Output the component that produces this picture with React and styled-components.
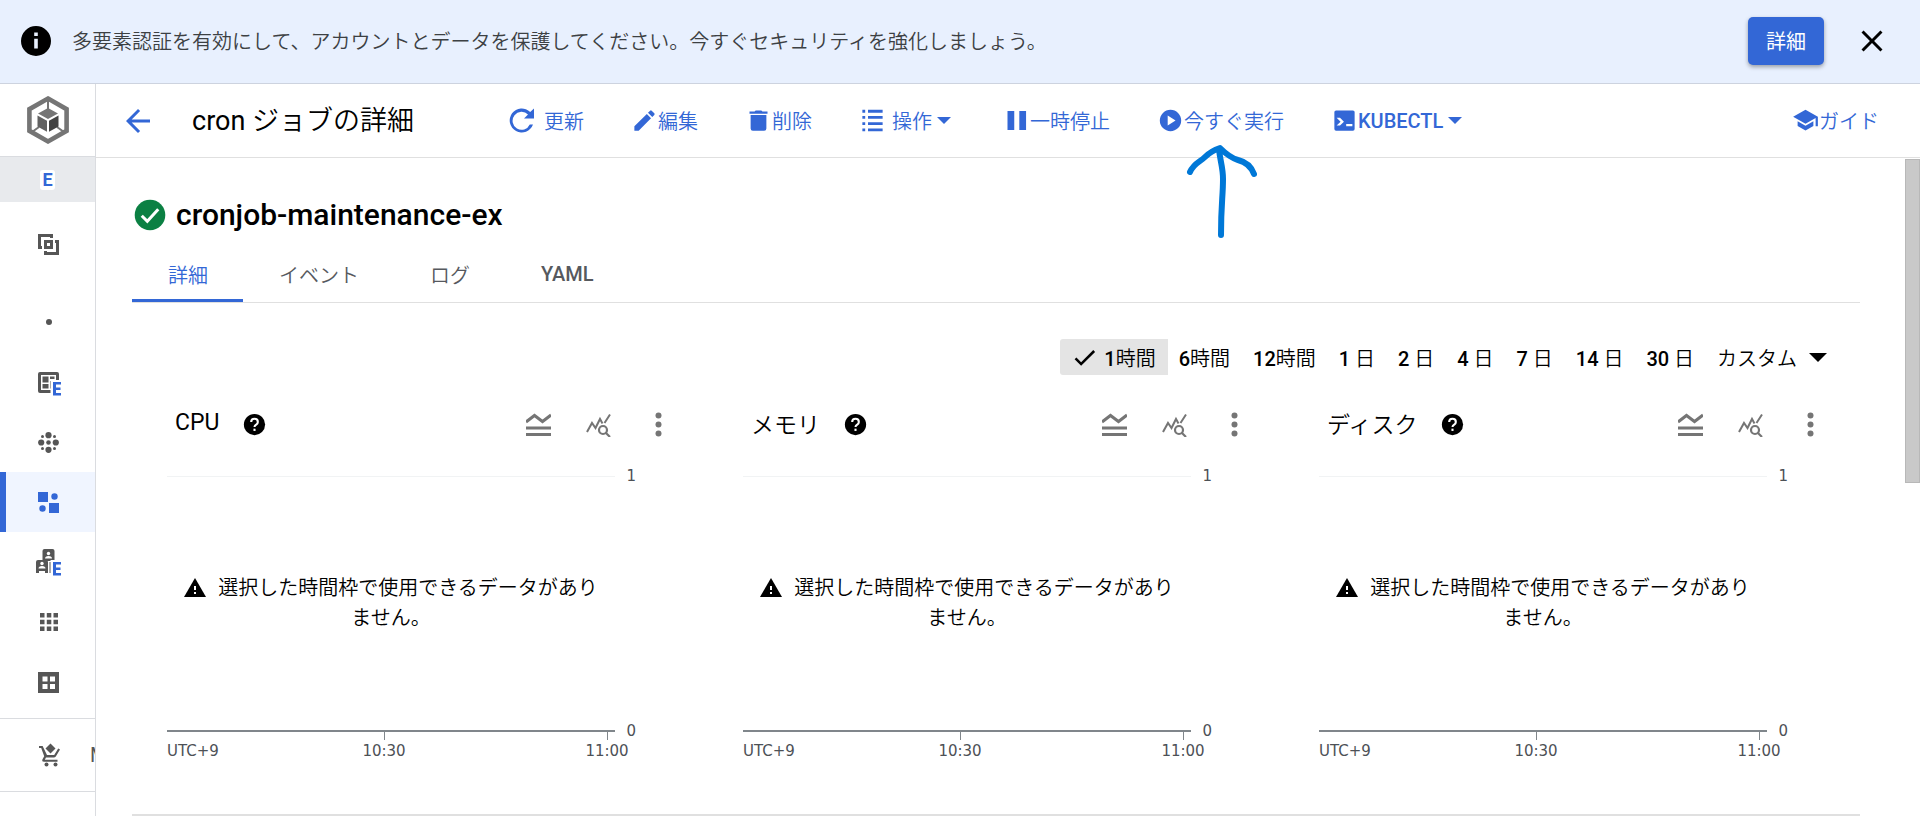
import React from "react";
import styled, { createGlobalStyle } from "styled-components";

const BLUE = "#3367d6";

const charts = ["CPU", "メモリ", "ディスク"];
const ranges = [
  ["1", "時間"],
  ["6", "時間"],
  ["12", "時間"],
  ["1", " 日"],
  ["2", " 日"],
  ["4", " 日"],
  ["7", " 日"],
  ["14", " 日"],
  ["30", " 日"],
];
const tabs = ["詳細", "イベント", "ログ", "YAML"];

function Icon({ size = 27, box = 24, children, ...rest }) {
  return (
    <svg width={size} height={size} viewBox={`0 0 ${box} ${box}`} fill="currentColor" aria-hidden="true" {...rest}>
      {children}
    </svg>
  );
}

function EnterpriseMark() {
  return (
    <>
      <path d="M15.500 11H27v16H15.500z" fill="#fff" />
      <path d="M18 13h8v2.500h-5v3h4.500V21H21v3h5v2.500h-8z" fill={BLUE} />
    </>
  );
}

function Banner() {
  return (
    <BannerBar>
      <Icon size={36}>
        <path d="M12 2a10 10 0 1 0 0 20 10 10 0 0 0 0-20zm1.200 15h-2.400v-6.500h2.400zm0-8.300h-2.400V6.400h2.400z" />
      </Icon>
      <BannerText>
        多要素認証を有効にして、アカウントとデータを保護してください。今すぐセキュリティを強化しましょう。
      </BannerText>
      <BannerButton>詳細</BannerButton>
      <IconButton aria-label="閉じる">
        <Icon size={36}>
          <path d="M19 6.400 17.600 5 12 10.600 6.400 5 5 6.400 10.600 12 5 17.600 6.400 19 12 13.400 17.600 19 19 17.600 13.400 12z" />
        </Icon>
      </IconButton>
    </BannerBar>
  );
}

function Sidebar() {
  return (
    <Side>
      <SideLogo>
        <svg width="42" height="48" viewBox="0 0 42 48" aria-label="Kubernetes Engine">
          <path d="M21 2.600 39.600 13.200v21.600L21 45.400 2.400 34.800V13.200z" fill="none" stroke="#757575" strokeWidth="4.600" />
          <path d="M21 4v10M12 31l-7 5M30 31l7 5" stroke="#757575" strokeWidth="2" />
          <path d="M21 12l10 5.500-10 5.500-10-5.500z" fill="#757575" />
          <path d="M10.500 19.500l9.500 5.300v11l-9.500-5.300z" fill="#616161" />
          <path d="M31.500 19.500 22 24.800v11l9.500-5.300z" fill="#424242" />
        </svg>
      </SideLogo>
      <SideBadgeRow>
        <SideBadge>E</SideBadge>
      </SideBadgeRow>
      <SideNav>
        <SideLink href="#overview" aria-label="概要" $tall>
          <Icon size={21} box={21}>
            <path d="M0 0h15v4h-3V3H3v9h1v3H0zM21 21H6v-4h3v1h9V9h-1V6h4zM6 6h9v9H6zm3 3v3h3V9z" fillRule="evenodd" />
          </Icon>
        </SideLink>
        <SideDivider>
          <Icon size={6} box={6}>
            <circle cx="3" cy="3" r="3" />
          </Icon>
        </SideDivider>
        <SideLink href="#fleet" aria-label="フリート">
          <Icon size={27} box={27}>
            <path d="M5 3h17q2 0 2 2v7h-3V6H6v15h10v3H5q-2 0-2-2V5q0-2 2-2z" />
            <path d="M7.500 7.500h6v6h-6zM7.500 15h6v4.500h-6zM15 7.500h4.500V10H15zM15 12h1.500v7.500H15z" />
            <EnterpriseMark />
          </Icon>
        </SideLink>
        <SideLink href="#clusters" aria-label="クラスタ">
          <Icon size={21} box={21}>
            <circle cx="10.500" cy="3.200" r="3.100" />
            <circle cx="10.500" cy="17.800" r="3.100" />
            <circle cx="3.200" cy="10.500" r="3.100" />
            <circle cx="17.800" cy="10.500" r="3.100" />
            <circle cx="10.500" cy="10.500" r="2.300" />
            <circle cx="4.500" cy="4.500" r="1.500" />
            <circle cx="16.500" cy="4.500" r="1.500" />
            <circle cx="4.500" cy="16.500" r="1.500" />
            <circle cx="16.500" cy="16.500" r="1.500" />
          </Icon>
        </SideLink>
        <SideLink href="#workloads" aria-label="ワークロード" $active>
          <Icon size={21} box={21}>
            <path d="M0 0h10v10H0zM11 11h10v10H11z" />
            <circle cx="16.500" cy="4.500" r="3.200" />
            <circle cx="4.500" cy="16.500" r="3.200" />
          </Icon>
        </SideLink>
        <SideLink href="#teams" aria-label="チーム">
          <Icon size={27} box={27}>
            <path d="M9.500 0h8q2 0 2 2v10h-12V2q0-2 2-2z" />
            <path d="M3 11h8q2 0 2 2v11h-3v-2H4v2H1V13q0-2 2-2zM14.500 13H16v11h-1.500z" />
            <circle cx="13.500" cy="4.500" r="1.700" fill="#fff" />
            <path d="M10 9.500q0-2.500 3.500-2.500T17 9.500z" fill="#fff" />
            <circle cx="7" cy="14.500" r="1.700" fill="#fff" />
            <path d="M3.500 19.500q0-2.500 3.500-2.500t3.500 2.500z" fill="#fff" />
            <EnterpriseMark />
          </Icon>
        </SideLink>
        <SideLink href="#apps" aria-label="アプリケーション">
          <Icon size={18} box={18}>
            <path d="M0 0h4.500v4.500H0zM6.800 0h4.500v4.500H6.800zM13.500 0H18v4.500h-4.500zM0 6.800h4.500v4.500H0zM6.800 6.800h4.500v4.500H6.800zM13.500 6.800H18v4.500h-4.500zM0 13.500h4.500V18H0zM6.800 13.500h4.500V18H6.800zM13.500 13.500H18V18h-4.500z" />
          </Icon>
        </SideLink>
        <SideLink href="#config" aria-label="構成">
          <Icon size={21} box={21}>
            <path d="M0 0h21v21H0zM4.500 4.500v5h5v-5zM12 4.500v5h5v-5zM4.500 12v5h5v-5zM12 12v5h5v-5z" fillRule="evenodd" />
          </Icon>
        </SideLink>
      </SideNav>
      <SideMarket href="#marketplace" aria-label="Marketplace">
        <Icon size={24}>
          <path d="M2 3h3.600l4.400 9h7.200l4-6.500 1.800 1-4.200 6.900q-.7 1.100-2 1.100H9l-1.200 2.200h12.700v2H7q-2.500 0-1.500-2.500l1.700-3L4.200 5H2z" />
          <path d="M13.500 0.500l5 5-5 5-5-5z" />
          <circle cx="9.500" cy="21.500" r="2" />
          <circle cx="18.500" cy="21.500" r="2" />
        </Icon>
        <SideMarketLabel>M</SideMarketLabel>
      </SideMarket>
    </Side>
  );
}

function Caret({ size = 14 }) {
  return (
    <svg width={size} height={size / 2} viewBox="0 0 14 7" fill="currentColor" aria-hidden="true">
      <path d="M0 0h14L7 7z" />
    </svg>
  );
}

function Toolbar() {
  return (
    <Header>
      <IconButton aria-label="戻る" $blue>
        <Icon size={36}>
          <path d="M20 11H7.800l5.600-5.600L12 4l-8 8 8 8 1.400-1.400L7.800 13H20z" />
        </Icon>
      </IconButton>
      <Title>
        <Latin>cron</Latin> ジョブの詳細
      </Title>
      <Actions>
        <Action $space={9}>
          <Icon size={27} box={27}>
            <path d="M22.200 5A12 12 0 1 0 25 17.500h-3.200A9 9 0 1 1 20 7.500L16 11.500h10V1.500z" />
          </Icon>
          更新
        </Action>
        <Action>
          <Icon>
            <path d="M3 17.200V21h3.800L17.800 9.900l-3.700-3.700zM20.700 7a1 1 0 0 0 0-1.400l-2.300-2.300a1 1 0 0 0-1.400 0l-1.900 1.800 3.800 3.800z" />
          </Icon>
          編集
        </Action>
        <Action>
          <Icon>
            <path d="M5 19q0 2 2 2h10q2 0 2-2V7H5zM20 4h-4.500l-1-1h-5l-1 1H4v2h16z" />
          </Icon>
          削除
        </Action>
        <Action $space={6}>
          <Icon>
            <path d="M3 2.500h2.500V5H3zM3 8h2.500v2.500H3zM3 13.500h2.500V16H3zM3 19h2.500v2.500H3zM8 2.500h13V5H8zM8 8h13v2.500H8zM8 13.500h13V16H8zM8 19h13v2.500H8z" />
          </Icon>
          操作
          <CaretSlot>
            <Caret />
          </CaretSlot>
        </Action>
        <Action>
          <Icon>
            <path d="M4 3.500h6v17H4zM14.500 3.500h6v17h-6z" />
          </Icon>
          一時停止
        </Action>
        <Action>
          <Icon>
            <path d="M12 2.500a9.500 9.500 0 1 0 0 19 9.500 9.500 0 0 0 0-19zM9.500 16.500v-9l7 4.500z" />
          </Icon>
          今すぐ実行
          <Pointer width="74" height="98" viewBox="0 0 74 98" aria-hidden="true">
            <path d="M5 29C9 20 15 19 20 14Q26 8 35 5C40 10 46 15 53 17Q65 20 69 31M34 6C35 18 38 24 38 36C38 54 36 60 36 92" />
          </Pointer>
        </Action>
        <Action $strong>
          <Icon>
            <path d="M4.500 3h15q1.500 0 1.500 1.500v15q0 1.500-1.500 1.500h-15Q3 21 3 19.500v-15Q3 3 4.500 3zM5 9.500 8.500 13 5 16.500h3l3.500-3.500L8 9.500zM13.500 15v2h5.500v-2z" fillRule="evenodd" />
          </Icon>
          KUBECTL
          <CaretSlot>
            <Caret />
          </CaretSlot>
        </Action>
      </Actions>
      <Guide href="#guide">
        <Icon>
          <path d="M12 2.500 1 8.700l11 6.200 9-5.100V17h2V8.700zM5 12.700v4.200l7 4 7-4v-4.200l-7 4z" />
        </Icon>
        ガイド
      </Guide>
    </Header>
  );
}

function Chart({ title }) {
  return (
    <ChartCard>
      <ChartHead>
        <ChartTitle $latin={/^[A-Z]+$/.test(title)}>{title}</ChartTitle>
        <IconButton aria-label="ヘルプ">
          <Icon size={25}>
            <circle cx="12" cy="12" r="10.200" />
            <path d="M8.800 9.700q0-3.200 3.200-3.200t3.200 3q0 1.400-1.600 2.600-1.600 1-1.600 2.400" fill="none" stroke="#fff" strokeWidth="2" />
            <path d="M11 16h2v2.200h-2z" fill="#fff" />
          </Icon>
        </IconButton>
        <ChartTools>
          <IconButton aria-label="凡例">
            <Icon size={25} box={25}>
              <path d="M0 10l8.500-6.500 8 6L25 3M0 16h25M0 22.500h25" fill="none" stroke="currentColor" strokeWidth="3" />
            </Icon>
          </IconButton>
          <IconButton aria-label="データを探索">
            <Icon size={25} box={25}>
              <path d="M1 20l5-9 3.500 5L14 7l2.500 4.500M18.500 11L24 2.500" fill="none" stroke="currentColor" strokeWidth="2" />
              <circle cx="17" cy="18" r="6" fill="#fff" />
              <circle cx="17" cy="18" r="4" fill="none" stroke="currentColor" strokeWidth="2.200" />
              <path d="M19.500 20.500l4.500 4.500" stroke="currentColor" strokeWidth="2.200" />
            </Icon>
          </IconButton>
          <IconButton aria-label="その他">
            <Icon size={25} box={25}>
              <circle cx="12.500" cy="3.500" r="3" />
              <circle cx="12.500" cy="12.500" r="3" />
              <circle cx="12.500" cy="21.500" r="3" />
            </Icon>
          </IconButton>
        </ChartTools>
      </ChartHead>
      <AxisRow>
        <GridLine />
        <AxisLabel>1</AxisLabel>
      </AxisRow>
      <Plot>
        <Message>
          <svg width="22" height="19" viewBox="0 0 22 19" aria-hidden="true">
            <path d="M11 0l11 19H0z" />
            <path d="M10 8h2v4h-2zM10 14h2v2h-2z" fill="#fff" />
          </svg>
          選択した時間枠で使用できるデータがありません。
        </Message>
      </Plot>
      <AxisRow>
        <BaseLine />
        <AxisLabel>0</AxisLabel>
      </AxisRow>
      <TimeAxis>
        <AxisLabel>UTC+9</AxisLabel>
        <Tick>10:30</Tick>
        <span />
        <Tick>11:00</Tick>
      </TimeAxis>
    </ChartCard>
  );
}

export default function App() {
  return (
    <Page>
      <GlobalStyle />
      <Banner />
      <Shell>
        <Sidebar />
        <Main>
          <Toolbar />
          <Body>
            <Content>
              <Status>
                <Icon size={36}>
                  <circle cx="12" cy="12" r="10.200" fill="#0b8043" />
                  <path d="M6.500 12.500l3.700 3.700 7.300-8" fill="none" stroke="#fff" strokeWidth="2" />
                </Icon>
                <JobName>cronjob-maintenance-ex</JobName>
              </Status>
              <Tabs role="tablist">
                {tabs.map((tab, i) => (
                  <Tab key={tab} role="tab" aria-selected={i === 0} $active={i === 0} $strong={tab === "YAML"}>
                    {tab}
                  </Tab>
                ))}
              </Tabs>
              <Ranges>
                {ranges.map(([count, unit], i) => (
                  <Range key={count + unit} $active={i === 0}>
                    {i === 0 && (
                      <Icon size={27}>
                        <path d="M9 16.200 4.800 12l-1.600 1.600L9 19.400 21.400 7l-1.600-1.600z" />
                      </Icon>
                    )}
                    <span>
                      <Count>{count}</Count>
                      {unit}
                    </span>
                  </Range>
                ))}
                <Range>
                  カスタム
                  <Caret size={18} />
                </Range>
              </Ranges>
              <Charts>
                {charts.map((title) => (
                  <Chart key={title} title={title} />
                ))}
              </Charts>
            </Content>
            <ScrollTrack>
              <ScrollThumb />
            </ScrollTrack>
          </Body>
        </Main>
      </Shell>
    </Page>
  );
}

const GlobalStyle = createGlobalStyle`
  * {
    box-sizing: border-box;
  }
  body {
    margin: 0;
    background: #fff;
    color: #000;
    font-family: Roboto, "Noto Sans CJK JP", sans-serif;
    font-size: 20px;
    font-weight: 350;
  }
  button {
    border: 0;
    padding: 0;
    background: none;
    color: inherit;
    font: inherit;
    cursor: pointer;
  }
  a {
    color: inherit;
    text-decoration: none;
  }
  svg {
    flex: none;
  }
`;

const Page = styled.div`
  display: flex;
  flex-direction: column;
  height: 100vh;
  overflow: hidden;
`;

const BannerBar = styled.div`
  display: flex;
  align-items: center;
  flex: none;
  height: 84px;
  padding: 0 30px 2px 18px;
  background: #e8f0fe;
  border-bottom: 1px solid #cdd3df;
`;

const BannerText = styled.p`
  flex: 1;
  margin: 0 18px;
  color: #3c4043;
`;

const BannerButton = styled.button`
  height: 48px;
  margin-right: 30px;
  padding: 0 18px;
  border-radius: 5px;
  background: ${BLUE};
  color: #fff;
  font-weight: 400;
  box-shadow: 0 2px 4px rgba(0, 0, 0, 0.35);
`;

const IconButton = styled.button`
  display: flex;
  color: ${(p) => (p.$blue ? BLUE : "inherit")};
`;

const Shell = styled.div`
  display: flex;
  flex: 1;
  min-height: 0;
`;

const Side = styled.aside`
  flex: none;
  width: 96px;
  border-right: 1px solid #dadce0;
  overflow: hidden;
  color: #565656;
`;

const SideLogo = styled.div`
  display: flex;
  align-items: center;
  justify-content: center;
  height: 73px;
  border-bottom: 1px solid #dadce0;
`;

const SideBadgeRow = styled.div`
  display: flex;
  align-items: center;
  justify-content: center;
  height: 45px;
  background: #e8eaed;
`;

const SideBadge = styled.span`
  padding: 0 2px;
  border-radius: 3px;
  background: #fff;
  color: ${BLUE};
  font-size: 18px;
  font-weight: 700;
  line-height: 20px;
`;

const SideNav = styled.nav`
  display: flex;
  flex-direction: column;
  border-bottom: 1px solid #dadce0;
  padding-bottom: 6px;
`;

const SideLink = styled.a`
  display: flex;
  align-items: center;
  justify-content: center;
  height: ${(p) => (p.$tall ? 84 : 60)}px;
  padding-left: 2px;
  border-left: ${(p) => (p.$active ? `6px solid ${BLUE}` : "0")};
  padding-right: ${(p) => (p.$active ? 6 : 0)}px;
  background: ${(p) => (p.$active ? "#f0f5ff" : "none")};
  color: ${(p) => (p.$active ? BLUE : "inherit")};
`;

const SideDivider = styled.div`
  display: flex;
  align-items: center;
  justify-content: center;
  height: 66px;
  padding: 6px 0 0 2px;
`;

const SideMarket = styled.a`
  display: flex;
  align-items: center;
  gap: 29px;
  height: 73px;
  padding-left: 37px;
  border-bottom: 1px solid #dadce0;
  color: #565656;
  font-weight: 400;
`;

const SideMarketLabel = styled.span`
  flex: 1;
  min-width: 0;
  overflow: hidden;
`;

const Main = styled.main`
  display: flex;
  flex-direction: column;
  flex: 1;
  min-width: 0;
`;

const Header = styled.header`
  display: flex;
  align-items: center;
  flex: none;
  height: 74px;
  padding: 0 41px 0 24px;
  border-bottom: 1px solid #e0e0e0;
  white-space: nowrap;
`;

const Title = styled.h1`
  margin: 0 94px 0 36px;
  font-size: 27px;
  font-weight: inherit;
  line-height: 36px;
`;

const Latin = styled.span`
  font-weight: 400;
`;

const Actions = styled.div`
  display: flex;
  flex: 1;
  gap: 47px;
`;

const Action = styled.button`
  position: relative;
  display: flex;
  align-items: center;
  color: ${BLUE};
  font-weight: ${(p) => (p.$strong ? 500 : "inherit")};

  > svg:first-child {
    margin-right: ${(p) => p.$space || 0}px;
  }
`;

const CaretSlot = styled.span`
  display: flex;
  padding: 0 5px;
`;

const Pointer = styled.svg`
  position: absolute;
  top: 37px;
  left: 28px;
  fill: none;
  stroke: #0078d7;
  stroke-width: 6;
  stroke-linecap: round;
  stroke-linejoin: round;
  pointer-events: none;
`;

const Guide = styled.a`
  display: flex;
  align-items: center;
  color: ${BLUE};
`;

const Body = styled.div`
  display: flex;
  flex: 1;
  min-height: 0;
`;

const Content = styled.div`
  flex: 1;
  min-width: 0;
  padding: 39px 45px 0 36px;
`;

const ScrollTrack = styled.div`
  flex: none;
  width: 15px;
  padding-top: 1px;
`;

const ScrollThumb = styled.div`
  height: 324px;
  border: 1px solid #b8b8b8;
  background: #c9c9c9;
`;

const Status = styled.div`
  display: flex;
  align-items: center;
  gap: 8px;
`;

const JobName = styled.h2`
  margin: 0;
  font-size: 30px;
  font-weight: 500;
  line-height: 36px;
`;

const Tabs = styled.div`
  display: flex;
  height: 70px;
  border-bottom: 1px solid #e0e0e0;
`;

const Tab = styled.button`
  padding: 16px 35px 0 36px;
  border-bottom: 3px solid ${(p) => (p.$active ? BLUE : "transparent")};
  color: ${(p) => (p.$active ? BLUE : "#56595e")};
  font-weight: ${(p) => (p.$strong ? 500 : "inherit")};
`;

const Ranges = styled.div`
  display: flex;
  justify-content: flex-end;
  padding: 36px 21px 0 0;
`;

const Range = styled.button`
  display: flex;
  align-items: center;
  gap: ${(p) => (p.$active ? 6 : 12)}px;
  height: 36px;
  padding: 0 12px 0 11px;
  background: ${(p) => (p.$active ? "#e4e4e4" : "none")};
  border-radius: 3px 0 0 3px;
  white-space: pre;
`;

const Count = styled.span`
  font-weight: 500;
`;

const Charts = styled.div`
  display: grid;
  grid-template-columns: repeat(3, 1fr);
  border-bottom: 2px solid #e0e0e0;
`;

const ChartCard = styled.section`
  padding: 30px 35px 53px;
`;

const ChartHead = styled.div`
  display: flex;
  align-items: center;
  height: 39px;
  margin-bottom: 22px;
  padding-left: 8px;
`;

const ChartTitle = styled.h3`
  margin: 0 23px 0 0;
  padding-bottom: 4px;
  font-size: 23px;
  font-weight: ${(p) => (p.$latin ? 400 : "inherit")};
`;

const ChartTools = styled.div`
  display: flex;
  gap: 35px;
  margin-left: auto;
  padding-right: 2px;
  color: #757575;
`;

const AxisRow = styled.div`
  display: flex;
  align-items: center;
  gap: 11px;
  height: 20px;
  padding-right: 37px;
`;

const GridLine = styled.div`
  flex: 1;
  height: 1px;
  background: #f1f3f4;
`;

const BaseLine = styled.div`
  flex: 1;
  height: 2px;
  background: #80868b;
`;

const AxisLabel = styled.span`
  color: #4d5156;
  font-family: "DejaVu Sans", sans-serif;
  font-size: 15px;
  font-weight: 400;
  line-height: 20px;
`;

const Plot = styled.div`
  display: flex;
  align-items: center;
  justify-content: center;
  height: 235px;
  padding: 0 70px 2px 12px;
`;

const Message = styled.p`
  margin: 0;
  line-height: 30px;
  text-align: center;

  svg {
    margin-right: 12px;
    vertical-align: -2px;
  }
`;

const TimeAxis = styled.div`
  display: grid;
  grid-template-columns: 162fr 110fr 113fr 110fr 11fr;
`;

const Tick = styled(AxisLabel)`
  position: relative;
  text-align: center;

  &::before {
    content: "";
    position: absolute;
    top: -9px;
    left: 50%;
    height: 8px;
    border-left: 1px solid #80868b;
  }
`;
